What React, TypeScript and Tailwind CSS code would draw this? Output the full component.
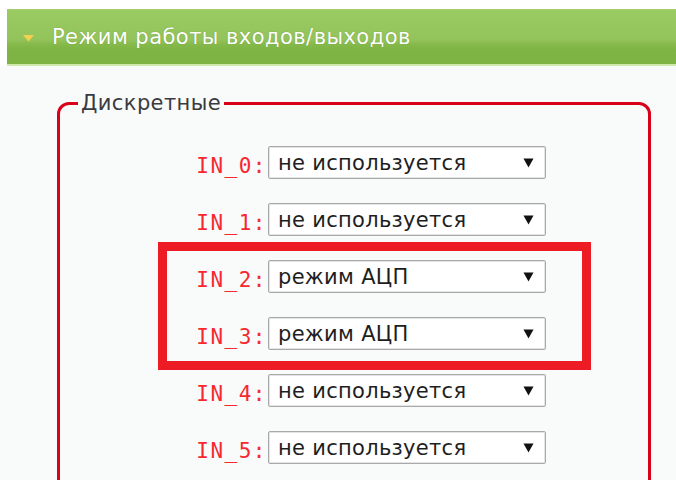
import React from "react";

type Row = { id: string; value: string };

const rows: Row[] = [
  { id: "IN_0", value: "не используется" },
  { id: "IN_1", value: "не используется" },
  { id: "IN_2", value: "режим АЦП" },
  { id: "IN_3", value: "режим АЦП" },
  { id: "IN_4", value: "не используется" },
  { id: "IN_5", value: "не используется" },
];

function FakeSelect({ value }: { value: string }) {
  return (
    <div className="flex h-[33px] w-[278px] items-center justify-between rounded-[2px] border border-[#a9a9a9] bg-white pl-[9px] pr-[11px] shadow-[inset_0_0_0_1px_#e4e4e4]">
      <span className="pt-[2px] text-[21px] leading-[29px] text-[#1e1e1e] tracking-[0.3px]">{value}</span>
      <svg width="11" height="10" viewBox="0 0 11 10" className="shrink-0">
        <polygon points="0.5,0.5 10.5,0.5 5.5,9.5" fill="#111" />
      </svg>
    </div>
  );
}

export default function App() {
  return (
    <div
      className="relative h-[480px] w-[676px] overflow-hidden bg-white"
      style={{ fontFamily: '"DejaVu Sans", Verdana, sans-serif' }}
    >
      {/* section header bar */}
      <div className="pl-[7px] pt-[9px]">
        <div className="flex h-[55px] items-center border-t border-[#a6d06f] bg-[linear-gradient(to_bottom,#9acb62_0px,#93c35b_30px,#86ba4c_34px,#7db443_40px,#7cb342_100%)] pl-[16px]">
          <svg width="11" height="7" viewBox="0 0 11 7" className="mr-[18px] mt-[2px]">
            <polygon points="0,0 11,0 5.5,6.5" fill="#f3d04e" />
          </svg>
          <span className="text-[21px] leading-none text-white tracking-[0.45px] [text-shadow:0_0_1px_rgba(60,100,20,0.5)]">
            Режим работы входов/выходов
          </span>
        </div>
        <div className="h-[2px] bg-[#cfe9ad]" />
      </div>

      <div className="h-full bg-[#f9fbfb] pt-[25px]">
        <fieldset className="ml-[57px] w-[594px] rounded-[12px] border-[3px] border-[#d9001a] px-0 pb-[40px]">
          <legend className="ml-[18px] px-[3px] text-[21px] leading-[24px] text-[#3a3a40] tracking-[0.4px]">
            Дискретные
          </legend>
          <div className="flex flex-col gap-[24px] pt-[31px]">
            {rows.map((r) => (
              <div key={r.id} className="flex h-[33px] items-start">
                <span
                  className="mt-[4px] w-[208px] shrink-0 pr-[1px] text-right text-[21px] leading-[33px] text-[#f7282e] tracking-[1.5px]"
                  style={{ fontFamily: '"DejaVu Sans Mono", monospace' }}
                >
                  {r.id}:
                </span>
                <FakeSelect value={r.value} />
              </div>
            ))}
          </div>
        </fieldset>
      </div>

      {/* highlight frame around the ADC rows */}
      <div className="absolute left-[158px] top-[242px] h-[128px] w-[433px] border-[9px] border-[#ed1c24]" />
    </div>
  );
}
